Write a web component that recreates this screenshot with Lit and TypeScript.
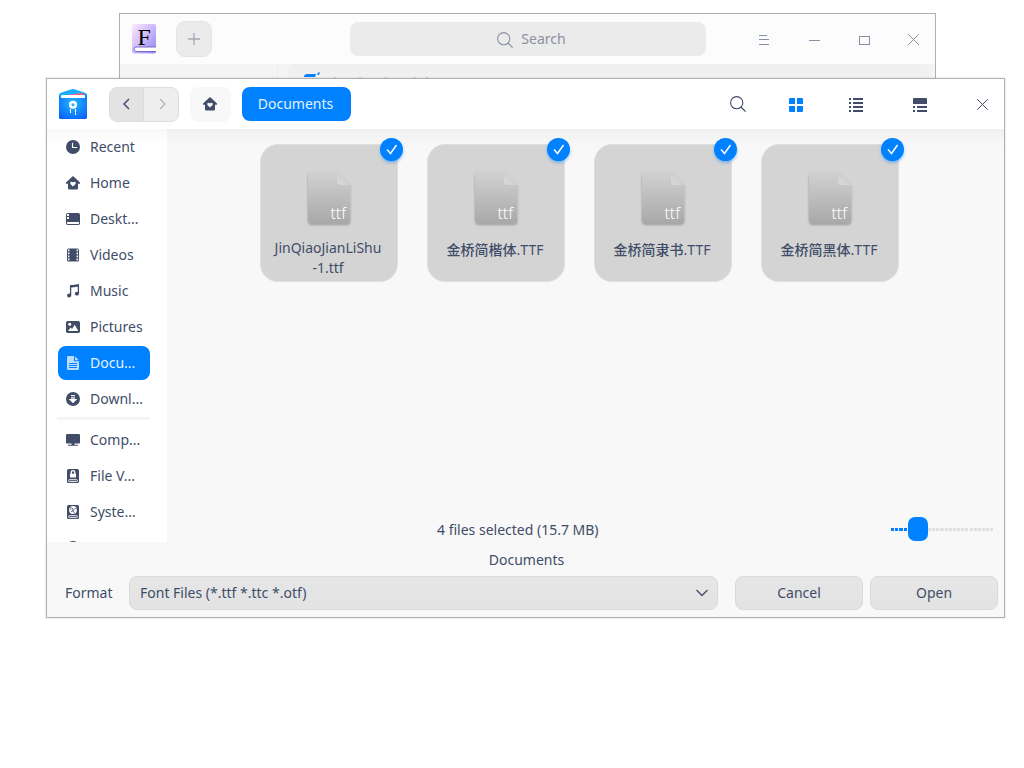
import { LitElement, html, svg, css } from "lit";
import { customElement, property } from "lit/decorators.js";

const houseHeart = svg`<path fill="currentColor" fill-rule="evenodd" d="M7 0L14 6.6V7.7H12V12.2Q12 13.5 10.7 13.5H3.3Q2 13.5 2 12.2V7.7H0V6.6ZM7 10.6L9.4 8.2Q10.3 6.9 9.3 6.1Q8 5.2 7 6.6Q6 5.2 4.7 6.1Q3.7 6.9 4.6 8.2Z"/>`;

const icons: Record<string, unknown> = {
  recent: svg`<circle cx="7" cy="7" r="7" fill="currentColor"/><path d="M6.5 2.8V7.5H11.2" fill="none" stroke="#fff" stroke-width="1.1"/>`,
  home: houseHeart,
  desktop: svg`<rect x="0" y="1" width="14" height="12" rx="1.8" fill="currentColor"/><path fill="#fff" d="M1 2h2v2H1zM1 5h2v2H1zM1 10h12v1.3q0 .7-.7.7H1.7Q1 12 1 11.300z"/>`,
  videos: svg`<rect x="1" y="0.500" width="12" height="13" rx="1.500" fill="currentColor"/><path stroke="#fff" stroke-width="1.500" stroke-dasharray="1.700 1.300" d="M2.700 1.500V13M11.300 1.500V13"/>`,
  music: svg`<path fill="none" stroke="currentColor" stroke-width="1.300" d="M4.600 11.200V1.900L12.400 1V9.400"/><path fill="currentColor" d="M4 1.600L13 .5V2.600L4 3.700z"/><ellipse cx="3.100" cy="11.500" rx="2.100" ry="1.900" fill="currentColor"/><ellipse cx="10.900" cy="9.700" rx="2.100" ry="1.900" fill="currentColor"/>`,
  pictures: svg`<rect x="0" y="1" width="14" height="12" rx="1.800" fill="currentColor"/><circle cx="3.700" cy="4.300" r="1.500" fill="#fff"/><path fill="#fff" d="M2 11L4.600 7.500L6 9L8.800 4.700L12.300 11z"/>`,
  documents: svg`<path fill="#b9dcff" d="M2.300 0H8V5.200H13V12.700Q13 14 11.700 14H2.300Q1 14 1 12.700V1.300Q1 0 2.300 0zM9 0.200L12.800 4.200H9z"/><path stroke="#0081ff" stroke-width="1" d="M3 7.500H11M3 9.500H11M3 11.500H11"/>`,
  downloads: svg`<circle cx="7" cy="7" r="7" fill="currentColor"/><path fill="#fff" d="M5 3h4v1.200H5zM5 5h4v2h2.300L7 11.300L2.700 7H5z"/><path stroke="currentColor" stroke-width=".7" d="M5 6H9"/>`,
  computer: svg`<rect x="0" y="1" width="14" height="8.800" rx="1.200" fill="currentColor"/><path fill="currentColor" d="M0 9h14v.8q0 .7-.7.7H.7Q0 10.500 0 9.800zM5.500 10.400h3v1.300h3.500v1H2v-1h3.500z"/>`,
  vault: svg`<rect x="1" y="0" width="12" height="14" rx="1.600" fill="currentColor"/><path fill="#fff" d="M4 4.700h6V8.500H4z"/><path fill="none" stroke="#fff" stroke-width="1.300" d="M5.300 5V3.200Q5.300 1.700 7 1.700T8.700 3.200V5"/><rect x="2.500" y="10.700" width="9" height="1.900" rx=".9" fill="none" stroke="#fff" stroke-width=".9"/>`,
  system: svg`<rect x="1" y="0" width="12" height="14" rx="1.600" fill="currentColor"/><circle cx="7" cy="5" r="3.900" fill="#fff"/><path fill="none" stroke="currentColor" stroke-width=".8" d="M4 2.500Q7.500 3 7 5T9 8.500M10.500 4Q9 2.500 8.300 4.200T5 6.800M5.200 4.800Q4.500 4 4 5"/><rect x="2.500" y="10.700" width="9" height="1.900" rx=".9" fill="none" stroke="#fff" stroke-width=".9"/>`,
  disk: svg`<circle cx="7" cy="7" r="7" fill="currentColor"/>`,
  search: svg`<circle cx="6.700" cy="6.700" r="6.100" fill="none" stroke="currentColor" stroke-width="1.100"/><path d="M11 11L15.600 15.600" stroke="currentColor" stroke-width="1.200"/>`,
  grid: svg`<path fill="currentColor" d="M1 0h5v6H0V1q0-1 1-1zM8 0h5q1 0 1 1v5H8zM0 8h6v6H1q-1 0-1-1zM8 8h6v5q0 1-1 1H8z"/>`,
  list: svg`<path fill="currentColor" d="M0 0h2v2H0zM4 0h10v2H4zM0 4h2v2H0zM4 4h10v2H4zM0 8h2v2H0zM4 8h10v2H4zM0 12h2v2H0zM4 12h10v2H4z"/>`,
  detail: svg`<path fill="currentColor" d="M1 0h12q1 0 1 1v5H0V1q0-1 1-1zM0 8h2v2H0zM4 8h10v2H4zM0 12h2v2H0zM4 12h10v2H4z"/>`,
  close: svg`<path stroke="currentColor" stroke-width="1" d="M.2.2L10.800 10.800M10.800.2L.2 10.800"/>`,
  left: svg`<path fill="none" stroke="currentColor" stroke-width="1.500" d="M6 1L1 6L6 11"/>`,
  right: svg`<path fill="none" stroke="currentColor" stroke-width="1.200" d="M1 1L6 6L1 11"/>`,
  down: svg`<path fill="none" stroke="currentColor" stroke-width="1.300" d="M.5 1L6 6.500L11.500 1"/>`,
  plus: svg`<path stroke="currentColor" stroke-width="1.300" d="M6 0V12M0 6H12"/>`,
  menu: svg`<path stroke="currentColor" stroke-width="1" d="M0 .5H8M0 4.500H10M0 9.500H10"/>`,
  minimize: svg`<path stroke="currentColor" stroke-width="1" d="M0 .5H11"/>`,
  maximize: svg`<rect x=".5" y=".5" width="10" height="8" fill="none" stroke="currentColor"/>`,
};

const icon = (name: string, w = 14, h = w) =>
  html`<svg width=${w} height=${h} viewBox="0 0 ${w} ${h}">${icons[name]}</svg>`;

const logo = html`<svg class="logo" width="28" height="32" viewBox="0 0 28 32">
  <defs>
    <linearGradient id="lid" x1="0" y1="0" x2="1" y2="1"><stop offset="0" stop-color="#14a0ff"/><stop offset=".5" stop-color="#15b7fd"/><stop offset="1" stop-color="#0b72ee"/></linearGradient>
    <radialGradient id="body" cx=".5" cy=".35" r=".75"><stop offset="0" stop-color="#21b8ff"/><stop offset="1" stop-color="#0860fa"/></radialGradient>
  </defs>
  <path fill="url(#lid)" d="M0 7Q0 5.500 2 4.700L12.500 1.200Q14 .7 15.500 1.200L26 4.700Q28 5.500 28 7V14H0z"/>
  <path fill="#ff5c7c" d="M4 7.500L23 5Q25 5 25 7V10H4z"/>
  <path fill="#fff" d="M2 8Q2 7 3.500 7H24.500Q26 7 26 8V11H2z"/>
  <path fill="url(#body)" d="M0 6.500Q1 10 3 10H25Q27.500 10 28 6.500V29.500Q28 31 26.500 31H1.500Q0 31 0 29.500z"/>
  <circle cx="14" cy="16.800" r="2.800" fill="none" stroke="#fff" stroke-width="2.500"/>
  <path stroke="#fff" stroke-width="1" d="M11.500 21V25M16.500 21V27"/>
</svg>`;

const fontLogo = html`<svg width="24" height="30" viewBox="0 0 24 30">
  <defs><linearGradient id="cover" x1="0" y1="0" x2="1" y2="1"><stop offset="0" stop-color="#ffe9fb"/><stop offset=".5" stop-color="#cdb9fb"/><stop offset="1" stop-color="#8f84f5"/></linearGradient></defs>
  <rect width="24" height="29.500" rx="2" fill="url(#cover)"/>
  <path d="M24 23H4Q2 23 2 25T4 27.500H24" fill="#fff" stroke="#6a5dbd" stroke-width=".9"/>
  <text x="12.300" y="21" text-anchor="middle" font-family="Liberation Serif, serif" font-size="24" fill="#000">F</text>
</svg>`;

@customElement("file-card")
export class FileCard extends LitElement {
  @property() name = "";
  @property() extra = "";

  static styles = css`
    :host { display: block; position: relative; box-sizing: border-box; width: 138px; height: 138px; border: 1px solid #dedede; border-radius: 18px; background: #d4d4d4; text-align: center; padding-top: 25px; }
    .page { display: block; margin: 0 auto; }
    .name { margin-top: 6px; padding-right: 2px; line-height: 20px; }
    .name.single { margin-top: 8px; }
    .han { font-weight: 500; }
    .check { position: absolute; right: -6px; top: -7px; width: 23px; height: 23px; border-radius: 50%; background: #0081ff; box-shadow: 0 2px 3px rgba(0, 129, 255, 0.4); }
    .check svg { display: block; }
    .ext { font: 300 17px "Noto Sans", sans-serif; }
  `;

  render() {
    const [stem, suffix] = this.name.split(".");
    return html`
      <svg class="page" width="50" height="62" viewBox="0 0 50 62">
        <defs>
          <linearGradient id="sheet" x1="0" y1="0" x2="0" y2="1"><stop offset="0" stop-color="#d1d1d1"/><stop offset="1" stop-color="#a8a8a8"/></linearGradient>
          <linearGradient id="fold" x1="0" y1="1" x2="1" y2="0"><stop offset="0" stop-color="#dadada"/><stop offset="1" stop-color="#c8c8c8"/></linearGradient>
          <filter id="soft" x="-20%" y="-20%" width="140%" height="140%"><feDropShadow dx="0" dy="1" stdDeviation="1.200" flood-opacity=".28"/></filter>
        </defs>
        <path filter="url(#soft)" fill="url(#sheet)" d="M8 2H33L46.300 15V50Q46.300 54 42.300 54H8Q4 54 4 50V6Q4 2 8 2z"/>
        <path fill="url(#fold)" d="M33 2L46.300 15H37Q33 15 33 11z"/>
        <text class="ext" x="42" y="49" text-anchor="end" fill="#fff" textLength="15.500" lengthAdjust="spacingAndGlyphs">ttf</text>
      </svg>
      <div class="name ${this.extra ? "" : "single"}">${this.extra
        ? html`${stem}<br />${this.extra}`
        : html`<span class="han">${stem}</span>.${suffix}`}</div>
      <div class="check"><svg width="23" height="23" viewBox="0 0 23 23"><path d="M7 11.500L10.500 15.500L16.500 7" fill="none" stroke="#fff" stroke-width="1.500"/></svg></div>
    `;
  }
}

@customElement("app-root")
export class AppRoot extends LitElement {
  static styles = css`
    :host { display: block; position: relative; width: 1024px; height: 768px; overflow: hidden; background: #fff; color: #414d68; font: 14px/20px "Noto Sans", "Noto Sans CJK SC", sans-serif; }
    * { box-sizing: border-box; }
    svg { display: block; flex: none; }
    .window { position: absolute; border: 1px solid #b0b0b0; overflow: hidden; }
    .center { display: flex; align-items: center; justify-content: center; }

    .manager { left: 119px; top: 13px; width: 817px; height: 80px; background: #f7f7f7; color: #8690a4; }
    .manager-bar { display: flex; align-items: center; height: 50px; background: #fcfcfc; padding: 0 16px 0 12px; }
    .add { width: 36px; height: 36px; margin-left: 20px; border-radius: 9px; border: 1px solid #e4e4e4; background: #ebebeb; color: #a4a9b3; }
    .find { width: 356px; height: 34px; margin-left: 138px; padding-left: 7px; gap: 8px; border-radius: 8px; background: #ebebeb; color: #8b90a4; }
    .find svg { margin-top: 1px; }
    .controls { display: flex; flex: 1; align-items: flex-start; justify-content: flex-end; }
    .control-menu { margin: 1px 40px 0 0; }
    .control-min { margin: 6px 39px 0 0; }
    .control-max { margin: 2px 38px 0 0; }
    .manager-body { display: flex; height: 30px; background: linear-gradient(#f3f3f3, #f8f8f8); }
    .manager-side { width: 158px; border-right: 1px solid #eee; }
    .preview { display: flex; width: 641px; margin-left: 10px; padding: 7px 15px; gap: 8px; border-radius: 8px 8px 0 0; background: linear-gradient(#efefef, #f3f3f3); color: #b9bec8; }
    .preview span { font-size: 15px; margin-top: 1px; }

    .dialog { left: 46px; top: 78px; width: 959px; height: 540px; display: flex; flex-direction: column; background: #f8f8f8; box-shadow: 0 0 2px rgba(0, 0, 0, 0.15); }
    .titlebar { display: flex; align-items: center; height: 50px; flex: none; padding: 0 16px 0 12px; background: #fff; }
    .logo { margin-top: -1px; }
    .history { display: flex; width: 70px; height: 35px; margin-left: 22px; border: 1px solid #dedede; border-radius: 8px; overflow: hidden; background: #eee; }
    .history .center { flex: 1; color: #adb1bc; padding-left: 2px; }
    .history .back { background: #e3e3e3; color: #414d68; border-right: 1px solid #dadada; padding: 0 1px 0 0; }
    .house { width: 41px; height: 35px; margin-left: 11px; padding-right: 1px; border-radius: 8px; background: #f8f8f8; }
    .crumb { width: 109px; height: 34px; margin-left: 11px; padding-right: 2px; border-radius: 8px; background: #0081ff; color: #e5f2ff; }
    .tools { display: flex; flex: 1; align-items: center; justify-content: flex-end; }
    .tool-search { margin-right: 43px; }
    .tool-grid { color: #0081ff; margin: 2px 46px 0 0; }
    .tool-list { margin: 2px 50px 0 0; }
    .tool-detail { margin: 2px 50px 0 0; }
    .tool-close { margin-top: 1px; }

    .content { display: flex; height: 413px; flex: none; }
    .sidebar { width: 120px; height: 413px; overflow: hidden; padding: 1px 17px 0 11px; background: linear-gradient(#f9f9f9, #fff 16px); }
    .place { display: flex; align-items: center; height: 34px; margin-bottom: 2px; padding-left: 8px; gap: 10px; border-radius: 8px; white-space: nowrap; }
    .place.active { background: #0081ff; color: #e5f2ff; }
    .divider { height: 3px; margin: -1px 0 3px -1px; background: #f4f4f4; }
    .files { display: flex; flex: 1; flex-direction: column; justify-content: space-between; padding-top: 15px; background: linear-gradient(#f0f0f0, #f8f8f8 16px); }
    .cards { display: flex; gap: 29px; padding-left: 93px; }
    .status { display: grid; grid-template-columns: 1fr 103px; align-items: center; height: 26px; padding: 0 10px 0 0; }
    .selected { padding: 2px 0 0 270px; }
    .slider { display: flex; align-items: center; height: 24px; }
    .dots { height: 3px; background: repeating-linear-gradient(90deg, #e0e0e0 0 3.100px, transparent 3.100px 4.150px); flex: 1; }
    .dots.filled { flex: none; width: 17px; background: repeating-linear-gradient(90deg, #0081ff 0 3.200px, transparent 3.200px 4.200px); }
    .knob { width: 20px; height: 24px; border-radius: 7px; background: #0081ff; }

    .folder { height: 34px; text-align: center; padding: 8px 0 0 2px; }
    .actions { display: flex; align-items: center; padding: 0 6px 0 18px; height: 34px; }
    .label { width: 64px; }
    .field { height: 34px; border: 1px solid #dadada; border-radius: 8px; background: linear-gradient(#e6e6e6, #e3e3e3); }
    .format { display: flex; width: 589px; align-items: center; justify-content: space-between; padding: 0 9px 0 10px; }
    .button { width: 128px; margin-left: 17px; }
    .button + .button { margin-left: 7px; }
  `;

  private place(id: string, label: string) {
    return html`<div class="place ${id === "documents" ? "active" : ""}">${icon(id)}<span>${label}</span></div>`;
  }

  render() {
    return html`
      <section class="window manager">
        <header class="manager-bar">
          ${fontLogo}
          <div class="add center">${icon("plus", 12)}</div>
          <div class="find center">${icon("search", 16)}<span>Search</span></div>
          <div class="controls">
            <span class="control-menu">${icon("menu", 10)}</span>
            <span class="control-min">${icon("minimize", 11, 1)}</span>
            <span class="control-max">${icon("maximize", 11, 9)}</span>
            <span>${icon("close", 11)}</span>
          </div>
        </header>
        <div class="manager-body">
          <div class="manager-side"></div>
          <div class="preview">
            <svg width="18" height="16" viewBox="0 0 18 16"><path fill="#0081ff" d="M1 5Q2 3 4 3H13L12 6H1zM14 3.500L15 1.500H17L16 4z"/></svg>
            <span>JinQiaoJianLiShu</span>
          </div>
        </div>
      </section>

      <section class="window dialog">
        <header class="titlebar">
          ${logo}
          <div class="history">
            <div class="back center">${icon("left", 7, 12)}</div>
            <div class="center">${icon("right", 7, 12)}</div>
          </div>
          <div class="house center">${icon("home")}</div>
          <div class="crumb center">Documents</div>
          <div class="tools">
            <span class="tool-search">${icon("search", 16)}</span>
            <span class="tool-grid">${icon("grid")}</span>
            <span class="tool-list">${icon("list")}</span>
            <span class="tool-detail">${icon("detail")}</span>
            <span class="tool-close">${icon("close", 11)}</span>
          </div>
        </header>
        <div class="content">
          <nav class="sidebar">
            ${this.place("recent", "Recent")} ${this.place("home", "Home")} ${this.place("desktop", "Deskt...")}
            ${this.place("videos", "Videos")} ${this.place("music", "Music")} ${this.place("pictures", "Pictures")}
            ${this.place("documents", "Docu...")} ${this.place("downloads", "Downl...")}
            <div class="divider"></div>
            ${this.place("computer", "Comp...")} ${this.place("vault", "File V...")} ${this.place("system", "Syste...")}
            ${this.place("disk", "")}
          </nav>
          <main class="files">
            <div class="cards">
              <file-card name="JinQiaoJianLiShu" extra="-1.ttf"></file-card>
              <file-card name="金桥简楷体.TTF"></file-card>
              <file-card name="金桥简隶书.TTF"></file-card>
              <file-card name="金桥简黑体.TTF"></file-card>
            </div>
            <div class="status">
              <div class="selected">4 files selected (15.7 MB)</div>
              <div class="slider"><div class="dots filled"></div><div class="knob"></div><div class="dots"></div></div>
            </div>
          </main>
        </div>
        <div class="folder">Documents</div>
        <footer class="actions">
          <div class="label">Format</div>
          <div class="field format"><span>Font Files (*.ttf *.ttc *.otf)</span>${icon("down", 12, 8)}</div>
          <div class="field button center">Cancel</div>
          <div class="field button center">Open</div>
        </footer>
      </section>
    `;
  }
}
